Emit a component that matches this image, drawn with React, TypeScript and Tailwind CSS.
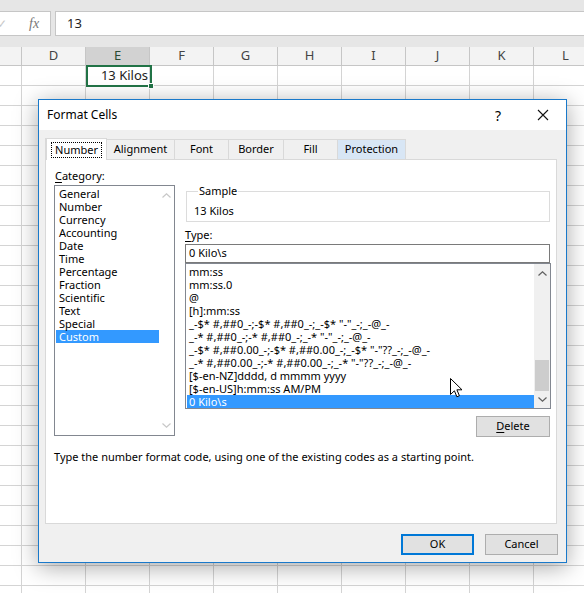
import React from "react";

const cols = ["D", "E", "F", "G", "H", "I", "J", "K", "L"];

const categories = [
  "General",
  "Number",
  "Currency",
  "Accounting",
  "Date",
  "Time",
  "Percentage",
  "Fraction",
  "Scientific",
  "Text",
  "Special",
  "Custom",
];

const formats = [
  "mm:ss",
  "mm:ss.0",
  "@",
  "[h]:mm:ss",
  '_-$* #,##0_-;-$* #,##0_-;_-$* "-"_-;_-@_-',
  '_-* #,##0_-;-* #,##0_-;_-* "-"_-;_-@_-',
  '_-$* #,##0.00_-;-$* #,##0.00_-;_-$* "-"??_-;_-@_-',
  '_-* #,##0.00_-;-* #,##0.00_-;_-* "-"??_-;_-@_-',
  "[$-en-NZ]dddd, d mmmm yyyy",
  "[$-en-US]h:mm:ss AM/PM",
  "0 Kilo\\s",
];

function Chevron({ up, color }: { up?: boolean; color: string }) {
  return (
    <svg width="9" height="5" viewBox="0 0 9 5" className="block">
      <path
        d={up ? "M0.5 4.5 L4.5 0.8 L8.5 4.5" : "M0.5 0.5 L4.5 4.2 L8.5 0.5"}
        fill="none"
        stroke={color}
        strokeWidth="1.2"
      />
    </svg>
  );
}

function Tab({ label, w, active, hover }: { label: string; w: string; active?: boolean; hover?: boolean }) {
  if (active) {
    return (
      <div className={`${w} h-[22px] relative z-10 -mb-px bg-white border border-b-0 border-[#d9d9d9] flex items-center justify-center`}>
        <span className="border border-dotted border-black px-[3px] leading-[14px]">{label}</span>
      </div>
    );
  }
  return (
    <div
      className={`${w} h-[20px] border-t border-r border-[#d9d9d9] flex items-center justify-center ${
        hover ? "bg-[#d8e6f5]" : "bg-[#f0f0f0]"
      }`}
    >
      {label}
    </div>
  );
}

export default function App() {
  return (
    <div className="relative w-[584px] h-[593px] overflow-hidden bg-white font-['Noto_Sans',sans-serif] text-black">
      {/* formula bar */}
      <div className="h-[47px] bg-[#e6e6e6] pt-[11px] flex">
        <div className="w-[51px] h-[25px] bg-white border border-l-0 border-[#c6c6c6] flex items-center overflow-hidden">
          <span className="ml-[-3px] text-[12px] text-[#c8c8c8]">✓</span>
          <span className="ml-[22px] font-['Liberation_Serif',serif] italic text-[14px] text-[#777]">fx</span>
        </div>
        <div className="ml-[4px] flex-1 h-[25px] bg-white border border-r-0 border-[#c6c6c6] flex items-center pl-[11px] text-[13px] text-[#222]">
          13
        </div>
      </div>

      {/* column headers */}
      <div className="h-[19px] flex bg-[#f3f3f3] border-b border-[#c6c6c6] text-[13px] text-[#444]">
        <div className="w-[22px] shrink-0 border-r border-[#c6c6c6]" />
        {cols.map((c) => (
          <div
            key={c}
            className={`w-[64px] shrink-0 border-r border-[#c6c6c6] flex items-center justify-center ${
              c === "E" ? "bg-[#d2d2d2] text-[#2b4b33]" : ""
            }`}
          >
            {c}
          </div>
        ))}
      </div>

      {/* grid rows */}
      {Array.from({ length: 27 }).map((_, r) => (
        <div key={r} className="h-[20px] flex">
          <div className="w-[22px] shrink-0 border-r border-b border-[#d4d4d4]" />
          {cols.map((c) => (
            <div key={c} className="w-[64px] shrink-0 border-r border-b border-[#d4d4d4]" />
          ))}
        </div>
      ))}

      {/* selected cell */}
      <div className="absolute left-[86px] top-[65px] w-[66px] h-[22px] border-2 border-[#217346] flex items-center justify-end pr-[2px] text-[13px] text-[#222]">
        13 Kilos
        <div className="absolute right-[-4px] bottom-[-4px] w-[6px] h-[6px] bg-[#217346] border border-white" />
      </div>

      {/* dialog */}
      <div className="absolute left-[38px] top-[99px] w-[529px] h-[464px] border border-[#1979ca] bg-[#f0f0f0] shadow-[0_4px_22px_rgba(0,0,0,0.35)] flex flex-col text-[11px]">
        <div className="h-[30px] bg-white flex items-center shrink-0">
          <span className="ml-[8px] text-[12px]">Format Cells</span>
          <span className="ml-auto text-[14px] mr-[36px]">?</span>
          <svg width="12" height="12" viewBox="0 0 12 12" className="mr-[17px]">
            <path d="M1 1 L11 11 M11 1 L1 11" stroke="#111" strokeWidth="1.1" />
          </svg>
        </div>

        <div className="pt-[7px] pl-[6px] pr-[9px]">
          <div className="flex items-end h-[22px]">
            <div className="flex items-end border-l border-[#d9d9d9]">
              <Tab label="Number" w="w-[61px]" active />
            </div>
            <Tab label="Alignment" w="w-[68px]" />
            <Tab label="Font" w="w-[54px]" />
            <Tab label="Border" w="w-[55px]" />
            <Tab label="Fill" w="w-[54px]" />
            <Tab label="Protection" w="w-[68px]" hover />
          </div>

          {/* panel */}
          <div className="h-[365px] bg-white border border-[#d9d9d9] pl-[8px] pt-[9px]">
            <div className="flex">
              <div className="w-[121px] shrink-0">
                <div className="h-[16px] leading-[14px] ml-[1px]">
                  <span className="underline underline-offset-2">C</span>ategory:
                </div>
                <div className="h-[251px] border border-[#828790] bg-white flex">
                  <div className="flex-1 pt-[1px] pl-[1px]">
                    {categories.map((c) => (
                      <div
                        key={c}
                        className={`h-[13px] leading-[13px] pl-[3px] ${
                          c === "Custom" ? "bg-[#3399ff] text-white" : ""
                        }`}
                      >
                        {c}
                      </div>
                    ))}
                  </div>
                  <div className="w-[15px] flex flex-col justify-between items-center pt-[7px] pb-[7px]">
                    <Chevron up color="#c8c8c8" />
                    <Chevron color="#c8c8c8" />
                  </div>
                </div>
              </div>

              <div className="ml-[10px] w-[366px]">
                <fieldset className="mt-[15px] ml-[1px] w-[364px] h-[38px] border border-[#dcdcdc] pl-[7px]">
                  <legend className="ml-[4px] px-[1px] leading-[14px]">Sample</legend>
                  <div className="mt-[6px] leading-[14px]">13 Kilos</div>
                </fieldset>
                <div className="mt-[7px] h-[15px] leading-[11px]">
                  <span className="underline underline-offset-2">T</span>ype:
                </div>
                <div className="h-[19px] w-[365px] border border-[#7a7a7a] bg-white flex items-center pl-[3px]">
                  0 Kilo\s
                </div>
                <div className="h-[146px] w-[366px] border border-[#828790] bg-white flex">
                  <div className="flex-1 pt-[1px] pl-[1px] overflow-hidden whitespace-nowrap">
                    {formats.map((f, i) => (
                      <div
                        key={i}
                        className={`h-[13px] leading-[13px] pl-[2px] ${
                          i === formats.length - 1 ? "bg-[#3399ff] text-white" : ""
                        }`}
                      >
                        {f}
                      </div>
                    ))}
                  </div>
                  <div className="w-[16px] bg-[#f0f0f0] flex flex-col items-center pt-[7px] pb-[6px]">
                    <Chevron up color="#606060" />
                    <div className="flex-1" />
                    <div className="w-[14px] h-[31px] bg-[#cdcdcd] mb-[6px]" />
                    <Chevron color="#606060" />
                  </div>
                </div>
                <div className="flex justify-end mt-[7px] pr-[1px]">
                  <div className="w-[74px] h-[21px] bg-[#e1e1e1] border border-[#adadad] flex items-center justify-center">
                    <span>
                      <span className="underline underline-offset-2">D</span>elete
                    </span>
                  </div>
                </div>
              </div>
            </div>
            <div className="mt-[13px] leading-[14px]">
              Type the number format code, using one of the existing codes as a starting point.
            </div>
          </div>
        </div>

        <div className="flex justify-end gap-[11px] pr-[8px] mt-[10px]">
          <div className="w-[73px] h-[21px] border-2 border-[#0078d7] bg-[#e1e1e1] flex items-center justify-center">
            OK
          </div>
          <div className="w-[73px] h-[21px] border border-[#adadad] bg-[#e1e1e1] flex items-center justify-center">
            Cancel
          </div>
        </div>
      </div>

      {/* mouse pointer */}
      <svg width="14" height="21" viewBox="0 0 14 21" className="absolute left-[450px] top-[378px]">
        <path
          d="M0.5 0.5 L0.5 16.5 L4.4 12.8 L6.9 18.8 L9.4 17.7 L6.9 11.8 L12 11.8 Z"
          fill="#fff"
          stroke="#000"
          strokeWidth="1"
          strokeLinejoin="round"
        />
      </svg>
    </div>
  );
}
